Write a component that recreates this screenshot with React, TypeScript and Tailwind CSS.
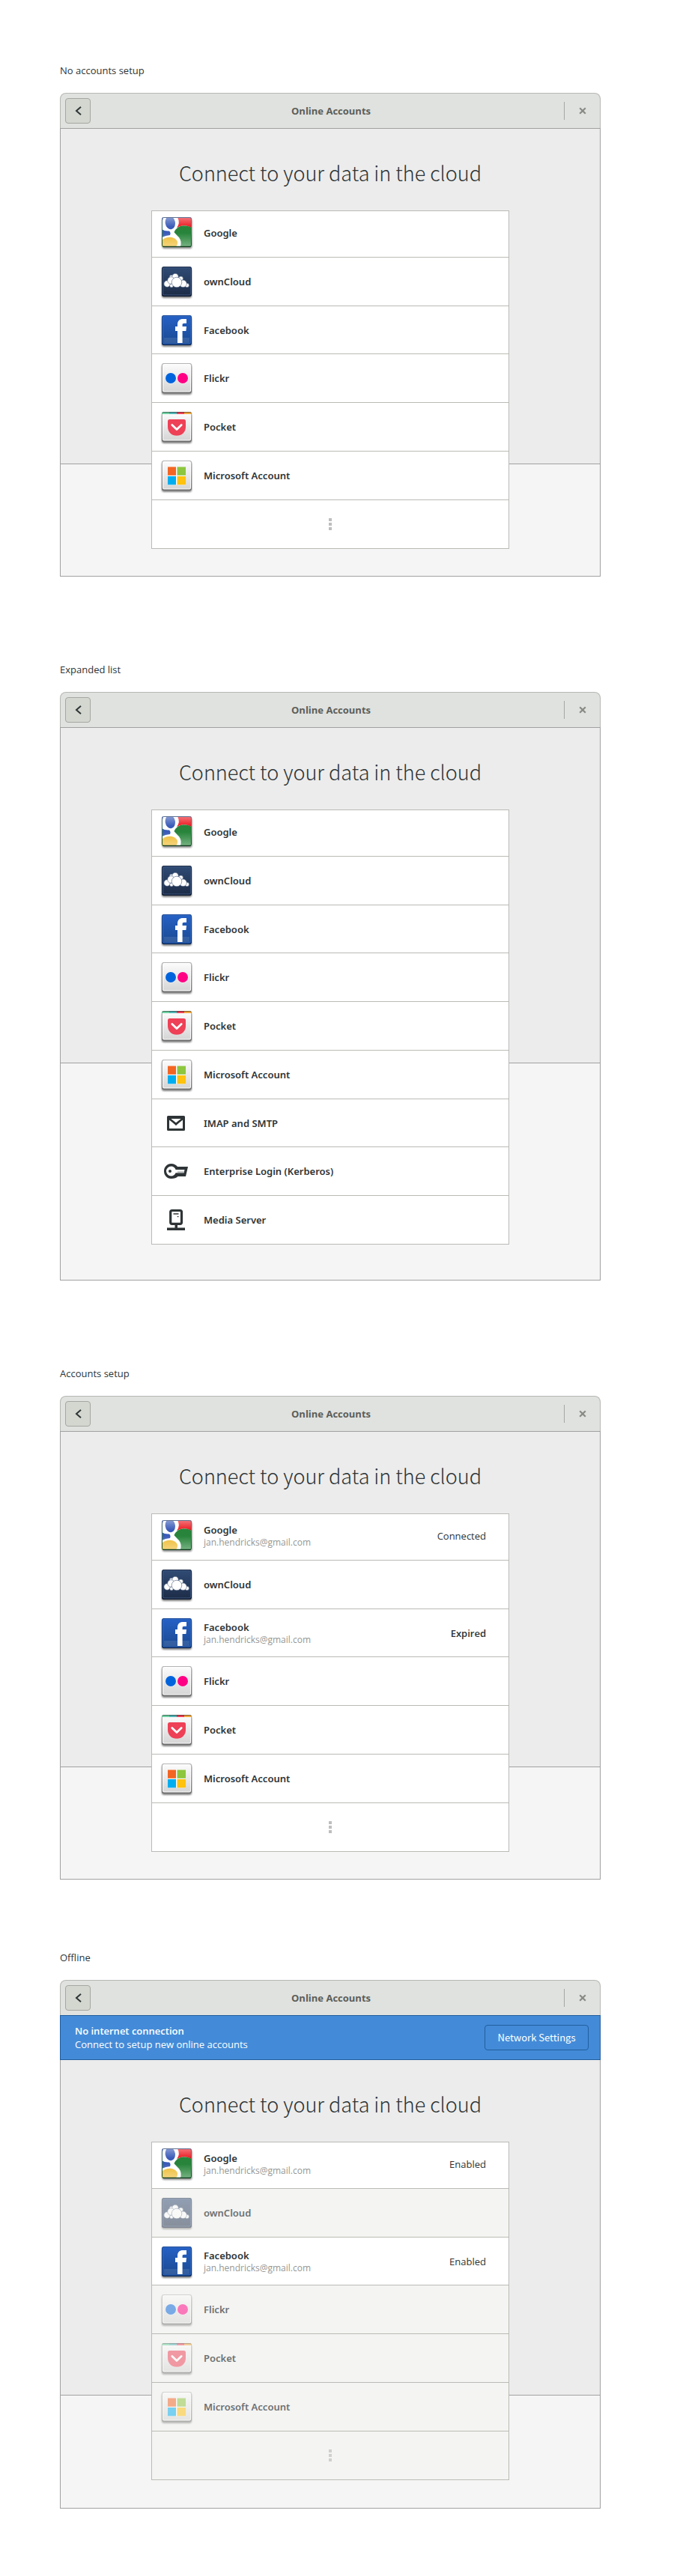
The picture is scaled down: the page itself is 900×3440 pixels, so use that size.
import React, { useId } from "react";

type IconProps = { className?: string };

function Tile({
  top,
  bottom,
  edgeTop,
  edgeBottom,
  shine,
  className,
  children,
}: {
  top: string;
  bottom: string;
  edgeTop: string;
  edgeBottom: string;
  shine: string;
  className?: string;
  children: React.ReactNode;
}) {
  const id = useId().replace(/[^a-zA-Z0-9]/g, "");
  return (
    <svg viewBox="0 0 40 40" aria-hidden="true" className={className}>
      <defs>
        <linearGradient id={`fill${id}`} x1="0" y1="0" x2="0" y2="1">
          <stop offset="0" stopColor={top} />
          <stop offset="1" stopColor={bottom} />
        </linearGradient>
        <linearGradient id={`edge${id}`} x1="0" y1="0" x2="0" y2="1">
          <stop offset="0" stopColor={edgeTop} />
          <stop offset="1" stopColor={edgeBottom} />
        </linearGradient>
        <filter id={`blur${id}`} x="-20%" y="-20%" width="140%" height="140%">
          <feGaussianBlur stdDeviation="1" />
        </filter>
      </defs>
      <rect x="0" y="2" width="40" height="40" rx="3" fill="#000" opacity="0.5" filter={`url(#blur${id})`} />
      <rect width="40" height="40" rx="2.5" fill={`url(#edge${id})`} />
      <rect x="1" y="1" width="38" height="37.5" rx="2" fill={shine} />
      <rect x="2" y="2" width="36" height="35.5" rx="1.2" fill={`url(#fill${id})`} />
      {children}
    </svg>
  );
}

function GoogleIcon({ className }: IconProps) {
  const id = useId().replace(/[^a-zA-Z0-9]/g, "");
  return (
    <svg viewBox="0 0 40 40" aria-hidden="true" className={className}>
      <defs>
        <clipPath id={`clip${id}`}>
          <rect width="40" height="40" rx="2.5" />
        </clipPath>
        <linearGradient id={`gloss${id}`} x1="0" y1="0" x2="0" y2="1">
          <stop offset="0" stopColor="#fff" stopOpacity="0.4" />
          <stop offset="1" stopColor="#fff" stopOpacity="0" />
        </linearGradient>
        <linearGradient id={`glow${id}`} x1="0" y1="0" x2="0" y2="1">
          <stop offset="0" stopColor="#fff" stopOpacity="0" />
          <stop offset="1" stopColor="#fff" stopOpacity="0.38" />
        </linearGradient>
        <linearGradient id={`rim${id}`} x1="0" y1="0" x2="0" y2="1">
          <stop offset="0" stopColor="#5c6f90" />
          <stop offset="0.5" stopColor="#3d7a55" />
          <stop offset="1" stopColor="#124a24" />
        </linearGradient>
        <filter id={`blur${id}`} x="-20%" y="-20%" width="140%" height="140%">
          <feGaussianBlur stdDeviation="1" />
        </filter>
      </defs>
      <rect x="0.5" y="2" width="40" height="40" rx="3" fill="#000" opacity="0.45" filter={`url(#blur${id})`} />
      <g clipPath={`url(#clip${id})`}>
        <rect width="40" height="40" fill="#fff" />
        <path d="M0 16Q4 19 10 18.4Q12.500 20.500 11 24Q5 24.500 0 27Z" fill="#3a5bb8" />
        <path d="M0 0H2.500Q1.500 4 0 6Z" fill="#3a5bb8" />
        <ellipse cx="11.3" cy="7.4" rx="6.6" ry="8.9" transform="rotate(-9 11.3 7.4)" fill="#3a5bb8" />
        <path d="M21 0H40V14.500Q33 9.500 25 12Q22 13 20 14Q25 8 21 0Z" fill="#ed1c24" />
        <path d="M16.500 20Q20 12 29 11.200Q36 11.200 40 14.500V40H24.500Q27.500 33 23 27Q18 22 16.500 20Z" fill="#27843a" />
        <path d="M0 31Q5 26.500 12 26.800Q19 27.500 21 33Q21.500 38 18 40H0Z" fill="#eebb30" />
        <rect width="40" height="13" fill={`url(#gloss${id})`} />
        <rect y="21" width="40" height="19" fill={`url(#glow${id})`} />
      </g>
      <rect x="0.5" y="0.5" width="39" height="39" rx="2.2" fill="none" stroke={`url(#rim${id})`} />
      <path d="M1.500 39.400H38.500" stroke="#0e3b1c" strokeWidth="1.2" />
    </svg>
  );
}

const cloudPuffs: [number, number, number][] = [
  [13, 14, 2.7],
  [25.5, 16, 3],
  [18, 13.5, 4.2],
  [33.8, 25, 2.7],
  [7.2, 23, 4.3],
  [12.5, 18.5, 4.8],
  [13, 25.5, 2.4],
  [28.5, 22.8, 4.8],
  [20, 21, 6.8],
];

function OwnCloudIcon({ className }: IconProps) {
  return (
    <Tile top="#2f4a73" bottom="#1d2d48" edgeTop="#1a2b47" edgeBottom="#0e1a2e" shine="#3c567f" className={className}>
      <g fill="#fff" stroke="#4d6080" strokeWidth="0.6">
        {cloudPuffs.map(([cx, cy, r]) => (
          <circle key={`${cx}-${cy}`} cx={cx} cy={cy} r={r} />
        ))}
      </g>
    </Tile>
  );
}

function FacebookIcon({ className }: IconProps) {
  return (
    <Tile top="#2560c4" bottom="#1b4a92" edgeTop="#1a4a9c" edgeBottom="#0b2a5c" shine="#3068c0" className={className}>
      <rect x="3" y="30" width="34" height="7" fill="#fff" opacity="0.1" />
      <path
        d="M21 37V21H18V15H21V12.500C21 7.500 23.500 5 28.500 5H33V10.800H30.200C28 10.800 27.600 11.600 27.600 13.200V15H33L32.400 21H27.600V37Z"
        fill="#fff"
      />
    </Tile>
  );
}

const paper = { top: "#fbfbfb", bottom: "#d6d6d6", edgeTop: "#b4b4b4", edgeBottom: "#6c6c6c", shine: "#ffffff" };

function FlickrIcon({ className }: IconProps) {
  return (
    <Tile {...paper} className={className}>
      <circle cx="12" cy="20" r="7.4" fill="#fff" opacity="0.8" />
      <circle cx="28" cy="20" r="7.4" fill="#fff" opacity="0.8" />
      <circle cx="12" cy="20" r="7" fill="#0063dc" />
      <circle cx="28" cy="20" r="7" fill="#ff0084" />
    </Tile>
  );
}

function PocketIcon({ className }: IconProps) {
  return (
    <Tile {...paper} className={className}>
      <path d="M0 3V2Q0.500 0 2.500 0H10V3Z" fill="#6fcfa0" />
      <path d="M10 0H20V3H10Z" fill="#4fb5b5" />
      <path d="M20 0H30V3H20Z" fill="#ee4056" />
      <path d="M30 0H37.500Q39.500 0 40 2V3H30Z" fill="#eda63c" />
      <path d="M0.500 1.500Q1 0.500 2.500 0.500H37.500Q39 0.500 39.500 1.500" fill="none" stroke="#000" strokeOpacity="0.45" />
      <path
        d="M10.500 10H29.500Q32 10 32 12.500V20C32 27 27 31.800 20 31.800S8 27 8 20V12.500Q8 10 10.500 10Z"
        fill="#ee4056"
      />
      <path
        d="M13.800 17.500L20 23.500L26.200 17.500"
        fill="none"
        stroke="#fff"
        strokeWidth="2.8"
        strokeLinecap="round"
        strokeLinejoin="round"
      />
    </Tile>
  );
}

function MicrosoftIcon({ className }: IconProps) {
  return (
    <Tile {...paper} className={className}>
      <rect x="8" y="8" width="24" height="24.5" fill="#fff" opacity="0.8" />
      <rect x="8" y="8.5" width="11" height="11.3" fill="#f36523" />
      <rect x="20.5" y="8.5" width="11.5" height="11.3" fill="#8dc63f" />
      <rect x="8" y="21" width="11" height="11.3" fill="#00adef" />
      <rect x="20.5" y="21" width="11.5" height="11.3" fill="#ffc20e" />
    </Tile>
  );
}

function MailIcon({ className }: IconProps) {
  return (
    <svg viewBox="0 0 40 40" aria-hidden="true" className={className}>
      <path
        fillRule="evenodd"
        fill="#2e3436"
        d="M8.500 10H29.500Q31 10 31 11.500V28.500Q31 30 29.500 30H8.500Q7 30 7 28.500V11.500Q7 10 8.500 10ZM10 13.500V27H28V13.500L19 23Z"
      />
      <path d="M12 14H26L19 19.500Z" fill="#fff" />
      <path d="M9.500 13.500L19 21.200L28.500 13.500" fill="none" stroke="#2e3436" strokeWidth="2.6" />
    </svg>
  );
}

function KeyIcon({ className }: IconProps) {
  return (
    <svg viewBox="0 0 40 40" aria-hidden="true" className={className}>
      <path
        fillRule="evenodd"
        fill="#2e3436"
        d="M12.500 10C16.500 10 19.500 12 21 14H35L32 27H21.500C20 28.800 16.500 30 12.500 30C7 30 3 25.500 3 20S7 10 12.500 10ZM12.500 13.500A6.500 6.500 0 1 0 12.500 26.500C15.500 26.500 17.500 25 18.600 22.300H29.500L30.500 18H18.600C17.500 15 15.500 13.500 12.500 13.500Z"
      />
      <path d="M21 20.200H29.900L29.500 22.300H21Z" fill="#b5b7b8" />
      <circle cx="11" cy="20" r="2" fill="#2e3436" />
    </svg>
  );
}

function ServerIcon({ className }: IconProps) {
  return (
    <svg viewBox="0 0 40 40" aria-hidden="true" className={className}>
      <rect x="11.7" y="7.5" width="14.8" height="17.8" rx="2" fill="#fff" stroke="#2e3436" strokeWidth="3.2" />
      <path d="M15.500 12H22.500M20.700 15.600H22.500" stroke="#2e3436" strokeWidth="1.3" />
      <path d="M17.500 26H21V30.500H31V34H7V30.500H17.500Z" fill="#2e3436" />
    </svg>
  );
}

type Provider = { name: string; Icon: (props: IconProps) => React.ReactElement };

const providers: Provider[] = [
  { name: "Google", Icon: GoogleIcon },
  { name: "ownCloud", Icon: OwnCloudIcon },
  { name: "Facebook", Icon: FacebookIcon },
  { name: "Flickr", Icon: FlickrIcon },
  { name: "Pocket", Icon: PocketIcon },
  { name: "Microsoft Account", Icon: MicrosoftIcon },
];

const extraProviders: Provider[] = [
  { name: "IMAP and SMTP", Icon: MailIcon },
  { name: "Enterprise Login (Kerberos)", Icon: KeyIcon },
  { name: "Media Server", Icon: ServerIcon },
];

type Account = { email: string; status: string; alert?: boolean };
type Accounts = Record<string, Account>;

function ProviderRow({ provider, account, offline }: { provider: Provider; account?: Account; offline: boolean }) {
  const { name, Icon } = provider;
  const disabled = offline && !account;
  return (
    <li className="h-[65px] border-b border-[#babab6] first:h-[62px] last:h-16 last:border-b-0 nth-[4n+3]:h-16 [&:first-child_svg]:mt-2 [&:first-child>button]:pb-[3px]">
      <button
        type="button"
        disabled={disabled}
        className={`flex h-full w-full items-center gap-4 pr-[30px] pl-[13px] text-left ${disabled ? "bg-[#f4f4f2]" : "bg-white"}`}
      >
        <Icon className={`mt-3 size-10 shrink-0 self-start overflow-visible ${disabled ? "opacity-50" : ""}`} />
        <span className="flex min-w-0 flex-1 flex-col">
          <span
            className={`font-['Noto_Sans',sans-serif] text-[13px] leading-[18px] font-semibold ${disabled ? "text-[#6d7173]" : "text-[#2e3436]"}`}
          >
            {name}
          </span>
          {account && <span className="text-xs leading-4 text-[#959794]">{account.email}</span>}
        </span>
        {account && (
          <span className={`text-[13px] leading-5 text-[#2e3436] ${account.alert ? "font-semibold" : ""}`}>
            {account.status}
          </span>
        )}
      </button>
    </li>
  );
}

function MoreRow({ offline }: { offline: boolean }) {
  return (
    <li className="h-16">
      <button
        type="button"
        aria-label="Show more providers"
        disabled={offline}
        className={`flex h-full w-full flex-col items-center justify-center gap-0.5 ${offline ? "bg-[#f4f4f2]" : "bg-white"}`}
      >
        {[0, 1, 2].map((dot) => (
          <span key={dot} className={`size-1 ${offline ? "bg-[#cfcfce]" : "bg-[#bebebe]"}`} />
        ))}
      </button>
    </li>
  );
}

function HeaderBar() {
  return (
    <header className="flex h-[47px] items-center justify-between rounded-t-lg border border-b-0 border-[#b6b8b3] bg-[#e0e2df] px-1.5">
      <button
        type="button"
        aria-label="Back"
        className="flex size-[34px] items-center justify-center rounded border border-[#a5a7a2] bg-[#d3d7cf]"
      >
        <svg viewBox="0 0 16 16" aria-hidden="true" className="size-4">
          <path d="M12 2.800L6 8L12 13.200" fill="none" stroke="#2e3436" strokeWidth="2" />
        </svg>
      </button>
      <h2 className="pl-2.5 text-[13px] leading-5 font-bold text-[#5c5e5a]">Online Accounts</h2>
      <div className="flex items-center">
        <span className="h-6 w-px bg-[#a5a7a4]" />
        <button type="button" aria-label="Close" className="ml-[7px] flex size-[34px] items-center justify-center">
          <svg viewBox="0 0 10 10" aria-hidden="true" className="size-2.5">
            <path d="M1.200 1.200L8.800 8.800M8.800 1.200L1.200 8.800" stroke="#888a85" strokeWidth="2.2" />
          </svg>
        </button>
      </div>
    </header>
  );
}

function OfflineBanner() {
  return (
    <div className="flex h-[60px] items-center justify-between border border-[#215d9c] bg-[#438bd8] pr-[15px] pl-[19px] text-white">
      <div className="text-[13px] leading-[18px]">
        <p className="font-semibold">No internet connection</p>
        <p>Connect to setup new online accounts</p>
      </div>
      <button
        type="button"
        className="h-[34px] w-[139px] rounded border border-[#215d9c] font-['Noto_Sans_CJK_SC',sans-serif] text-[13px]"
      >
        Network Settings
      </button>
    </div>
  );
}

function AccountsWindow({
  caption,
  className,
  bottomClass,
  accounts = {},
  expanded = false,
  offline = false,
}: {
  caption: string;
  className: string;
  bottomClass: string;
  accounts?: Accounts;
  expanded?: boolean;
  offline?: boolean;
}) {
  const rows = expanded ? [...providers, ...extraProviders] : providers;
  return (
    <section className={className}>
      <h1 className="mb-5 text-[13px] leading-5 text-[#2e3436]">{caption}</h1>
      <HeaderBar />
      {offline && <OfflineBanner />}
      <div
        className={`border-x border-b border-[#a1a1a1] bg-[linear-gradient(to_bottom,#ececec_447px,#a1a1a1_447px,#a1a1a1_448px,#f5f5f5_448px)] ${offline ? "" : "border-t"} ${bottomClass}`}
      >
        <p className="pt-[39px] pb-[30px] text-center font-['Noto_Sans_CJK_SC',sans-serif] text-[27px] leading-10 font-light text-[#2e3436]">
          Connect to your data in the cloud
        </p>
        <ul className="mx-auto w-[478px] max-w-full border border-[#babab6] bg-white">
          {rows.map((provider) => (
            <ProviderRow key={provider.name} provider={provider} account={accounts[provider.name]} offline={offline} />
          ))}
          {!expanded && <MoreRow offline={offline} />}
        </ul>
      </div>
    </section>
  );
}

const email = "jan.hendricks@gmail.com";

const setupAccounts: Accounts = {
  Google: { email, status: "Connected" },
  Facebook: { email, status: "Expired", alert: true },
};

const enabledAccounts: Accounts = {
  Google: { email, status: "Enabled" },
  Facebook: { email, status: "Enabled" },
};

export default function App() {
  return (
    <main className="mx-auto max-w-[900px] bg-white pr-[98px] pb-[90px] pl-20 font-['Open_Sans',sans-serif]">
      <AccountsWindow caption="No accounts setup" className="pt-[84px]" bottomClass="pb-9" />
      <AccountsWindow caption="Expanded list" className="pt-[114px]" bottomClass="pb-[47px]" expanded />
      <AccountsWindow caption="Accounts setup" className="pt-[114px]" bottomClass="pb-9" accounts={setupAccounts} />
      <AccountsWindow caption="Offline" className="pt-[94px]" bottomClass="pb-[37px]" accounts={enabledAccounts} offline />
    </main>
  );
}
